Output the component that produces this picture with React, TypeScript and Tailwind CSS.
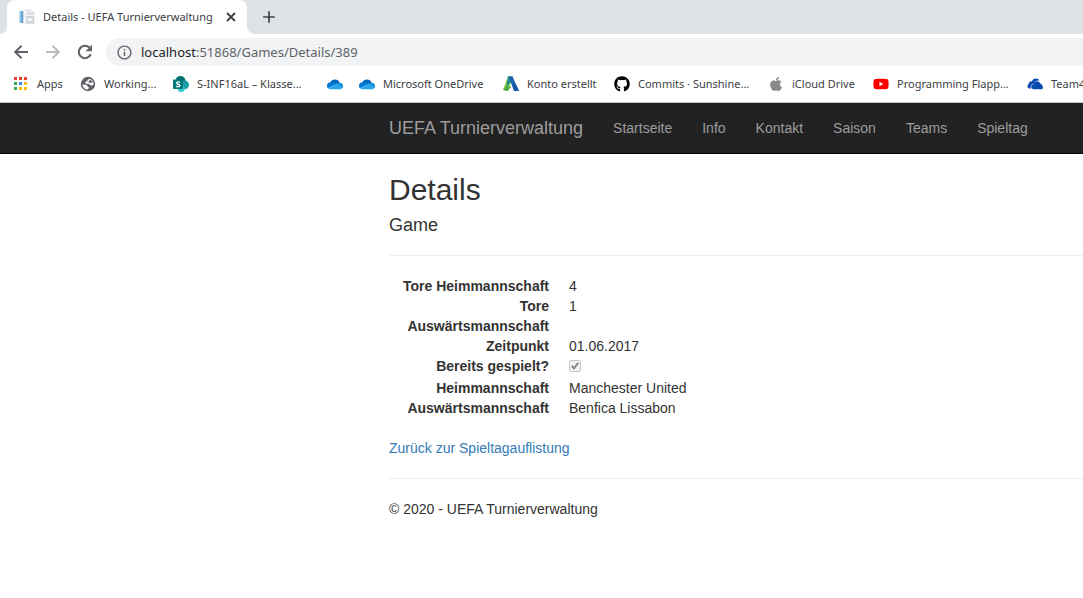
import type { ReactNode } from "react";
import { FaApple, FaGithub, FaYoutube } from "react-icons/fa";
import { MdAdd, MdInfoOutline } from "react-icons/md";

function PageIcon() {
  return (
    <svg viewBox="0 0 16 16" className="size-4 shrink-0" aria-hidden="true">
      <path d="M.5 2h4v12h-4z" fill="#5fa8d8" />
      <path d="M.5 2h1.200v12H.5z" fill="#b9dcf0" />
      <path d="M4.500 1h8l2.500 3v10.500H4.500z" fill="#f4f6f7" stroke="#d5d9dd" strokeWidth=".7" />
      <path d="M9 1v3h6M7 5.500h7" fill="none" stroke="#c9ced3" strokeWidth=".8" />
      <path d="M7.500 7.500h7v6h-7z" fill="#d9dde1" stroke="#c0c5ca" strokeWidth=".7" />
      <path d="M8.500 10.500h5" stroke="#fff" strokeWidth="1.500" />
    </svg>
  );
}

function BackIcon() {
  return (
    <svg viewBox="0 0 18 18" className="size-[18px] text-[#5f6368]" aria-hidden="true">
      <path d="M16 9H3.500M9.500 2.700 3.200 9l6.300 6.300" fill="none" stroke="currentColor" strokeWidth="2" />
    </svg>
  );
}

function ForwardIcon() {
  return (
    <svg viewBox="0 0 18 18" className="size-[18px] text-[#babcbe]" aria-hidden="true">
      <path d="M2 9h12.500M8.500 2.700 14.800 9l-6.300 6.300" fill="none" stroke="currentColor" strokeWidth="2" />
    </svg>
  );
}

function ReloadIcon() {
  return (
    <svg viewBox="0 0 18 18" className="size-[18px] text-[#5f6368]" aria-hidden="true">
      <path d="M14.800 11.200A6.200 6.200 0 1 1 13.400 4.600" fill="none" stroke="currentColor" strokeWidth="2.100" />
      <path d="M16 1.800v6.500H9.500z" fill="currentColor" />
    </svg>
  );
}

function CloseIcon() {
  return (
    <svg viewBox="0 0 16 16" className="size-4" aria-hidden="true">
      <path d="m4 4 8 8M12 4l-8 8" fill="none" stroke="currentColor" strokeWidth="1.800" />
    </svg>
  );
}

const appDots = ["#ea4335", "#ea4335", "#ea4335", "#34a853", "#4285f4", "#fbbc04", "#34a853", "#fbbc04", "#fbbc04"];

function AppsIcon() {
  return (
    <svg viewBox="0 0 16 16" className="size-4" shapeRendering="crispEdges" aria-hidden="true">
      {appDots.map((fill, i) => (
        <rect key={i} x={1 + (i % 3) * 5} y={1 + Math.floor(i / 3) * 5} width="3" height="3" fill={fill} />
      ))}
    </svg>
  );
}

function GlobeIcon() {
  return (
    <svg viewBox="0 0 16 16" className="size-4" aria-hidden="true">
      <circle cx="8" cy="8" r="7.200" fill="#5f6368" />
      <path
        d="M10.200 3C8.400 3 7.600 4 7.400 4.700 7 5.400 5.500 5.200 5.300 6.300c-.2 1 .7 1.700 1.900 1.700 1.300 0 2.200.1 2.800.7.500.5.700 1.100 1.600.9l1.900-.8A5.700 5.700 0 0 0 10.200 3z"
        fill="#fff"
      />
      <path d="M9.500 4.200h1.900l1.300 2-2 .9-2.500-.8z" fill="#5f6368" />
      <path
        d="M2.500 8.600c1.700-.2 3.600.1 4.500.9.600.6.400 1.200 1.300 1.400.9.300.700 1.200.1 1.500-.4.200-.4.700-.2 1.200A5.700 5.700 0 0 1 2.500 8.600z"
        fill="#fff"
      />
    </svg>
  );
}

function SharePointIcon() {
  return (
    <svg viewBox="0 0 16 16" className="size-4" aria-hidden="true">
      <circle cx="7.500" cy="5" r="5" fill="#036c70" />
      <circle cx="11.600" cy="8.800" r="4.400" fill="#1a9ba1" />
      <circle cx="8.200" cy="12.500" r="3.500" fill="#37c6d0" />
      <rect y="3.500" width="10" height="9.500" rx=".8" fill="#03787c" />
      <path
        d="M6.900 6.300C5.600 5.500 3.500 5.800 3.500 7.100c0 1.500 3.300.9 3.300 2.400 0 1.400-2.200 1.500-3.600.7"
        fill="none"
        stroke="#fff"
        strokeWidth="1.400"
      />
    </svg>
  );
}

function OneDriveIcon() {
  return (
    <svg viewBox="0 0 16 16" className="size-4" aria-hidden="true">
      <path d="M3.300 6.400A5.100 5.100 0 0 1 12.700 6.700L9 10z" fill="#0364b8" />
      <path d="M3.800 6.200C5.600 5.200 7.300 6.100 9.600 7.500L1 12.200A3.500 3.500 0 0 1 3.800 6.200z" fill="#0078d4" />
      <path d="M9.600 7.500c1.100-.9 2.300-1.100 3.500-.7A3.300 3.300 0 0 1 15.400 12L10 10z" fill="#1490df" />
      <path d="M1 12 9.600 7.500 15.500 11.800c-.6 1-1.500 1.500-2.800 1.500H4c-1.300 0-2.300-.4-3-1.300z" fill="#28a8ea" />
    </svg>
  );
}

function AutodeskIcon() {
  return (
    <svg viewBox="0 0 16 16" className="size-4" aria-hidden="true">
      <path d="M5 .5h4.500L5.200 15 0 13.800z" fill="#8dc63f" />
      <path d="M5 .5 9.500.5 7.800 6.500 3.200 11z" fill="#1f8e8a" />
      <path d="M3.200 10.500h5.300L4.200 15 0 14z" fill="#4aab45" />
      <path d="M5.500.5h4L16 15h-5z" fill="#1b62ad" />
      <path d="M9 8.200 11.200 15H16L13 8.500z" fill="#1858a8" />
    </svg>
  );
}

function CloudIcon() {
  return (
    <svg viewBox="0 0 16 16" className="size-4" aria-hidden="true">
      <path d="M1.800 12.400A2.500 2.500 0 0 1 1.700 8 3.300 3.300 0 0 1 4.900 5.200a4.300 4.300 0 0 1 7.700-.5c-3-.5-4.700.7-5.500 2.700-2.300.1-4 2.400-3.200 5z" fill="#094ab2" />
      <path d="M6.600 13.300a2.500 2.500 0 0 1 .1-5c.4-3.600 5.400-4 6.400-.9 1.400 0 1.900 1 1.800 2 1.800.900 1.200 3.900-.7 3.900z" fill="#094ab2" />
    </svg>
  );
}

type Bookmark = { label?: string; name: string; icon: ReactNode; width: string };

const bookmarks: Bookmark[] = [
  { label: "Apps", name: "Apps", icon: <AppsIcon />, width: "w-[67px]" },
  { label: "Working...", name: "Working", icon: <GlobeIcon />, width: "w-[93px]" },
  { label: "S-INF16aL – Klasse...", name: "SharePoint", icon: <SharePointIcon />, width: "w-[154px]" },
  { name: "OneDrive", icon: <OneDriveIcon />, width: "w-[32px]" },
  { label: "Microsoft OneDrive", name: "OneDrive", icon: <OneDriveIcon />, width: "w-[144px]" },
  { label: "Konto erstellt", name: "Autodesk", icon: <AutodeskIcon />, width: "w-[111px]" },
  { label: "Commits · Sunshine...", name: "GitHub", icon: <FaGithub className="size-4 text-black" />, width: "w-[154px]" },
  { label: "iCloud Drive", name: "iCloud", icon: <FaApple className="size-4 text-[#8a8a8a]" />, width: "w-[105px]" },
  { label: "Programming Flapp...", name: "YouTube", icon: <FaYoutube className="size-4 text-[#f00]" />, width: "w-[154px]" },
  { label: "Team4", name: "Team", icon: <CloudIcon />, width: "w-[80px]" },
];

function BrowserChrome() {
  return (
    <header className="overflow-hidden border-b border-[#c8cacd] bg-white font-['Noto_Sans','Open_Sans',sans-serif] text-[#3c4043]">
      <div className="flex h-[34px] items-stretch bg-[#dee1e6]">
        <div className="w-[7px] bg-white">
          <div className="h-full rounded-br-lg bg-[#dee1e6]" />
        </div>
        <div className="flex w-[240px] items-center rounded-t-lg bg-white pr-2 pl-3">
          <PageIcon />
          <span className="ml-2 flex-1 text-[11px] whitespace-nowrap">Details - UEFA Turnierverwaltung</span>
          <button type="button" aria-label="Tab schließen">
            <CloseIcon />
          </button>
        </div>
        <div className="w-2 bg-white">
          <div className="h-full rounded-bl-lg bg-[#dee1e6]" />
        </div>
        <button type="button" aria-label="Neuer Tab" className="ml-1">
          <MdAdd className="size-5" />
        </button>
      </div>
      <div className="flex h-9 items-center pl-3">
        <button type="button" aria-label="Zurück" className="mr-3.5">
          <BackIcon />
        </button>
        <button type="button" aria-label="Vorwärts" className="mr-3.5">
          <ForwardIcon />
        </button>
        <button type="button" aria-label="Neu laden" className="mr-3">
          <ReloadIcon />
        </button>
        <div className="flex h-7 flex-1 items-center gap-2 rounded-l-full bg-[#f1f3f4] pl-2.5">
          <MdInfoOutline className="size-[17px] text-[#5f6368]" />
          <span className="text-[13px] text-[#5f6368]">
            <span className="text-[#202124]">localhost</span>:51868/Games/Details/389
          </span>
        </div>
      </div>
      <nav aria-label="Lesezeichen" className="flex h-8 items-start pt-1.5 pl-[13px]">
        {bookmarks.map((b, i) => (
          <a key={i} href="#" aria-label={b.name} className={`flex h-4 shrink-0 items-center gap-2 text-[11px] whitespace-nowrap ${b.width}`}>
            <span className="size-4 shrink-0">{b.icon}</span>
            {b.label}
          </a>
        ))}
      </nav>
    </header>
  );
}

const links = ["Startseite", "Info", "Kontakt", "Saison", "Teams", "Spieltag"];

function Field({ label, children }: { label: ReactNode; children?: ReactNode }) {
  return (
    <div className="grid grid-cols-[160px_1fr] gap-x-5">
      <dt className="text-right font-bold">{label}</dt>
      <dd>{children}</dd>
    </div>
  );
}

export default function App() {
  return (
    <div className="min-h-screen overflow-x-hidden bg-white font-['Liberation_Sans',Arial,sans-serif] text-sm leading-5 text-[#333]">
      <BrowserChrome />
      <nav className="flex h-[51px] items-center overflow-hidden border-b border-[#080808] bg-[#222] pl-[389px] text-[#9d9d9d]">
        <a href="#" className="mr-[15px] shrink-0 text-lg leading-5">UEFA Turnierverwaltung</a>
        {links.map((l) => (
          <a key={l} href="#" className="shrink-0 px-[15px]">{l}</a>
        ))}
      </nav>
      <main className="pt-[19px] pl-[389px]">
        <h2 className="mb-2.5 text-[30px] leading-[33px]">Details</h2>
        <h4 className="text-lg leading-[19px]">Game</h4>
        <hr className="my-5 border-[#eee]" />
        <dl className="mb-5">
          <Field label="Tore Heimmannschaft">4</Field>
          <Field label="Tore Auswärtsmannschaft">1</Field>
          <Field label="Zeitpunkt">01.06.2017</Field>
          <Field label={<label htmlFor="played">Bereits gespielt?</label>}>
            <span className="grid h-[22px] w-3 items-start pt-1">
              <input
                id="played"
                type="checkbox"
                checked
                disabled
                readOnly
                className="col-start-1 row-start-1 size-3 appearance-none rounded-xs border border-[#c5c5c5] bg-[#f3f3f3]"
              />
              <svg viewBox="0 0 12 12" className="pointer-events-none col-start-1 row-start-1 size-3" aria-hidden="true">
                <path d="M2.800 6 5 8.300 9.200 2.800" fill="none" stroke="#8c8c8c" strokeWidth="2.200" />
              </svg>
            </span>
          </Field>
          <Field label="Heimmannschaft">Manchester United</Field>
          <Field label="Auswärtsmannschaft">Benfica Lissabon</Field>
        </dl>
        <p>
          <a href="#" className="text-[#337ab7]">Zurück zur Spieltagauflistung</a>
        </p>
        <hr className="my-5 border-[#eee]" />
        <footer>
          <p>© 2020 - UEFA Turnierverwaltung</p>
        </footer>
      </main>
    </div>
  );
}
